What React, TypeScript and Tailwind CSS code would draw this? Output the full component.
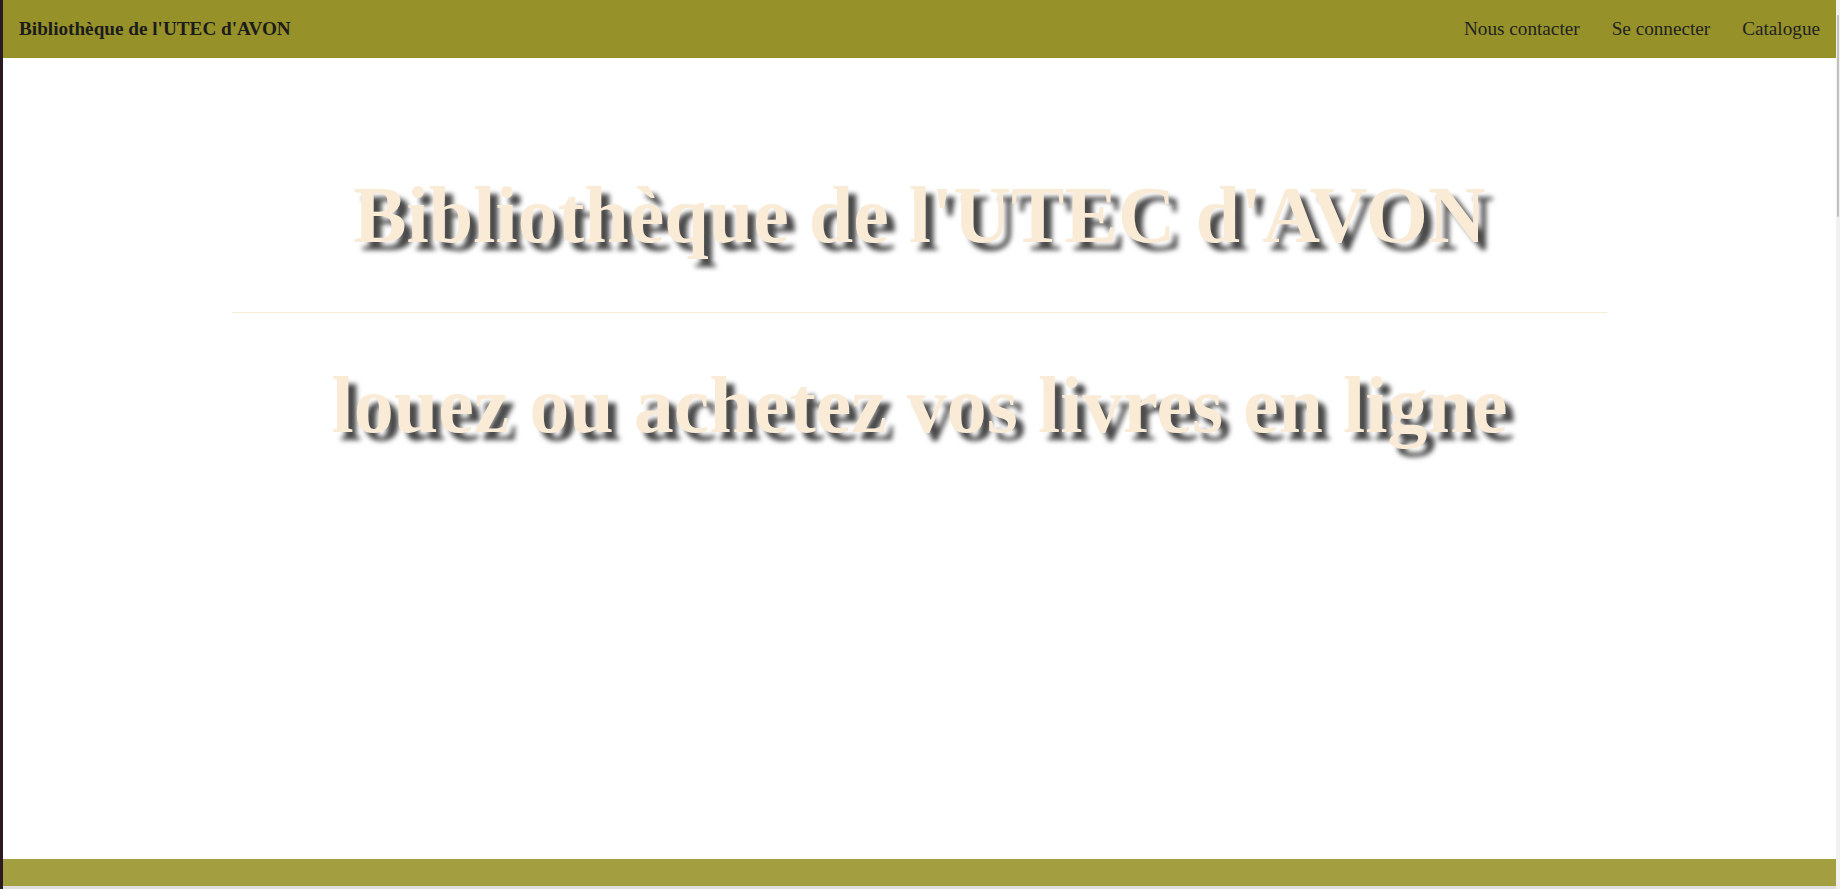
const links = ['Nous contacter', 'Se connecter', 'Catalogue']

export default function App() {
  return (
    <div className="flex h-screen overflow-hidden bg-white font-['Liberation_Serif',serif]">
      {/* left edge */}
      <div className="w-[3px] shrink-0 bg-[#2b1a22]" />

      <div className="flex min-w-0 flex-1 flex-col">
        <header className="flex h-[58px] shrink-0 items-center justify-between bg-[#969128] px-4 text-[19.2px] leading-[22px] text-[#1c1c1c]">
          <a className="font-bold">Bibliothèque de l'UTEC d'AVON</a>
          <nav className="flex gap-[32px]">
            {links.map((link) => (
              <a key={link} className="text-[#222]">
                {link}
              </a>
            ))}
          </nav>
        </header>

        <main className="flex flex-1 flex-col items-center text-center">
          <h1 className="mt-[111px] text-[80px] leading-[92px] font-bold text-[#faebd7] [text-shadow:8px_8px_5px_#4a4a4a]">
            Bibliothèque de l'UTEC d'AVON
          </h1>
          <hr className="mt-[51px] w-3/4 border-t border-[#faebd7]" />
          <h2 className="mt-[46px] text-[80px] leading-[92px] font-bold text-[#faebd7] [text-shadow:8px_8px_5px_#4a4a4a]">
            louez ou achetez vos livres en ligne
          </h2>
        </main>

        <footer className="h-[27px] shrink-0 bg-[#a39e40]" />
        <div className="h-[3px] shrink-0 bg-[#dedede]" />
      </div>

      {/* scrollbar */}
      <div className="w-[4px] shrink-0 bg-[#f1f1f1] pt-[15px]">
        <div className="mx-auto h-[202px] w-[2px] rounded-full bg-[#c1c1c1]" />
      </div>
    </div>
  )
}
